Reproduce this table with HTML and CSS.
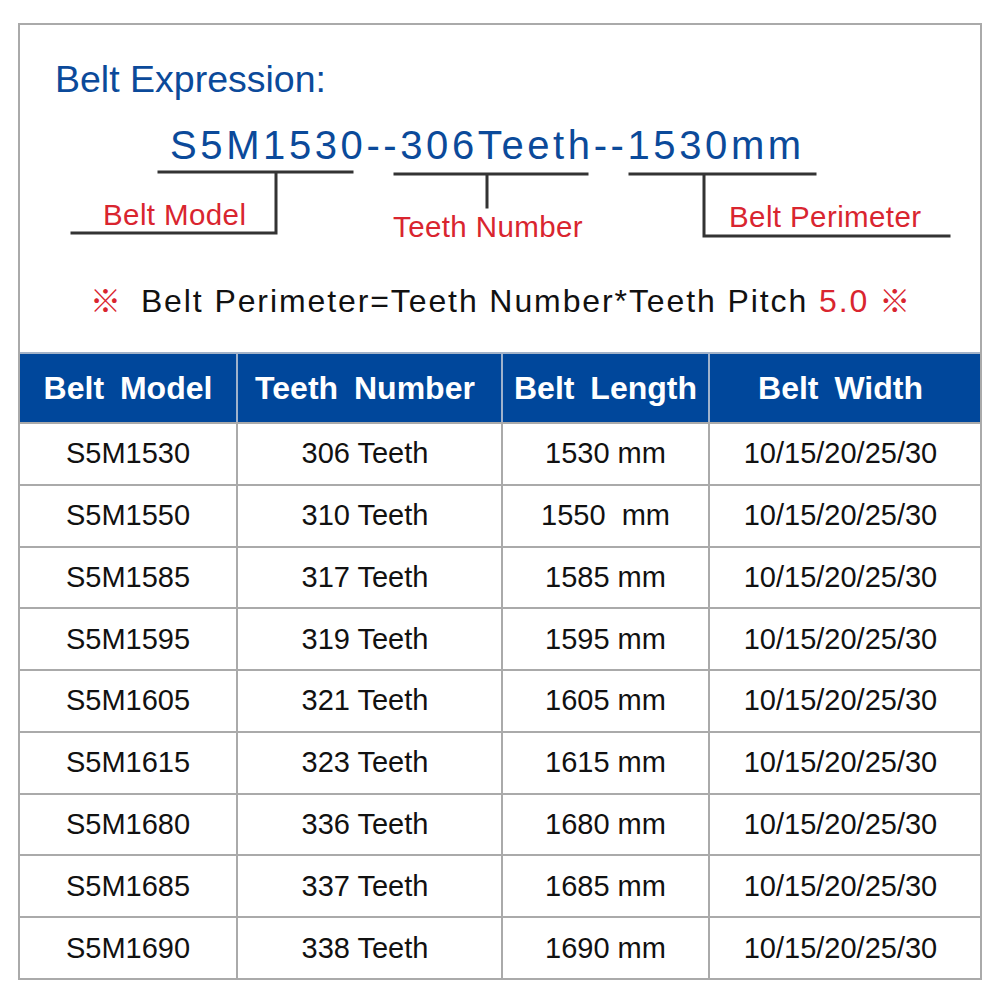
FILE: index.html
```html
<!DOCTYPE html>
<html>
<head>
<meta charset="utf-8">
<link rel="stylesheet" href="styles.css">
</head>
<body>
<div class="box">
  <section class="top">
    <h1 class="title">Belt Expression:</h1>
    <div class="diagram">
      <div class="expr">S5M1530--306Teeth--1530mm</div>
      <svg class="lines" width="960" height="130" viewBox="0 0 960 130">
        <g stroke="#333" stroke-width="3" fill="none" stroke-linecap="square">
          <path d="M139 52 H332 M256 52 V113 H52"/>
          <path d="M375 54 H567 M467 54 V87"/>
          <path d="M610 54 H795 M684 54 V116 H929"/>
        </g>
      </svg>
      <span class="label lbl-model">Belt Model</span>
      <span class="label lbl-teeth">Teeth Number</span>
      <span class="label lbl-perim">Belt Perimeter</span>
    </div>
    <p class="formula"><span class="mark">※</span>Belt Perimeter=Teeth Number*Teeth Pitch <span class="red">5.0</span><span class="mark mark-end">※</span></p>
  </section>
  <div class="table">
    <div class="row head">
      <div class="cell">Belt Model</div>
      <div class="cell">Teeth Number</div>
      <div class="cell">Belt Length</div>
      <div class="cell">Belt Width</div>
    </div>
    <div class="row"><div class="cell">S5M1530</div><div class="cell">306 Teeth</div><div class="cell">1530 mm</div><div class="cell">10/15/20/25/30</div></div>
    <div class="row"><div class="cell">S5M1550</div><div class="cell">310 Teeth</div><div class="cell">1550&nbsp; mm</div><div class="cell">10/15/20/25/30</div></div>
    <div class="row"><div class="cell">S5M1585</div><div class="cell">317 Teeth</div><div class="cell">1585 mm</div><div class="cell">10/15/20/25/30</div></div>
    <div class="row"><div class="cell">S5M1595</div><div class="cell">319 Teeth</div><div class="cell">1595 mm</div><div class="cell">10/15/20/25/30</div></div>
    <div class="row"><div class="cell">S5M1605</div><div class="cell">321 Teeth</div><div class="cell">1605 mm</div><div class="cell">10/15/20/25/30</div></div>
    <div class="row"><div class="cell">S5M1615</div><div class="cell">323 Teeth</div><div class="cell">1615 mm</div><div class="cell">10/15/20/25/30</div></div>
    <div class="row"><div class="cell">S5M1680</div><div class="cell">336 Teeth</div><div class="cell">1680 mm</div><div class="cell">10/15/20/25/30</div></div>
    <div class="row"><div class="cell">S5M1685</div><div class="cell">337 Teeth</div><div class="cell">1685 mm</div><div class="cell">10/15/20/25/30</div></div>
    <div class="row"><div class="cell">S5M1690</div><div class="cell">338 Teeth</div><div class="cell">1690 mm</div><div class="cell">10/15/20/25/30</div></div>
  </div>
</div>
</body>
</html>
```
FILE: styles.css
```css
html, body {
  margin: 0;
  padding: 0;
  background: #ffffff;
}
body {
  font-family: "Liberation Sans", Arial, "Noto Sans CJK SC", sans-serif;
  color: #111;
}
.box {
  margin: 23px 0 0 18px;
  width: 960px;
  border: 2px solid #aaaaaa;
}
.top {
  height: 327px;
  display: flex;
  flex-direction: column;
}
.title {
  margin: 36px 0 0 35px;
  font-size: 37.5px;
  line-height: 37px;
  font-weight: normal;
  color: #0b4a9a;
}
.diagram {
  position: relative;
  margin-top: 22px;
  height: 130px;
}
.expr {
  position: absolute;
  left: 150px;
  top: 5px;
  font-size: 40px;
  line-height: 40px;
  letter-spacing: 3.6px;
  color: #0b4a9a;
  white-space: nowrap;
}
.lines {
  position: absolute;
  left: 0;
  top: 0;
}
.label {
  position: absolute;
  font-size: 29.5px;
  line-height: 29px;
  color: #d9252f;
  white-space: nowrap;
  letter-spacing: 0.4px;
}
.lbl-model { left: 83px; top: 80px; }
.lbl-teeth { left: 373px; top: 92px; }
.lbl-perim { left: 709px; top: 82px; }
.formula {
  margin: 33px 0 0 0;
  text-align: center;
  font-size: 32px;
  line-height: 32px;
  color: #111;
  letter-spacing: 1.9px;
}
.red { color: #d9252f; }
.mark {
  color: #d9252f;
  font-family: "Noto Sans CJK SC", sans-serif;
  font-size: 31px;
  letter-spacing: 0;
  margin-right: 20px;
}
.mark-end {
  margin-right: 0;
  margin-left: 10px;
}
.table {
  display: flex;
  flex-direction: column;
}
.row {
  display: grid;
  grid-template-columns: 216px 265px 207px 272px;
  height: 61.78px;
  box-sizing: border-box;
  border-top: 2px solid #aaaaaa;
}
.cell {
  display: flex;
  align-items: center;
  justify-content: center;
  font-size: 29px;
  white-space: nowrap;
  color: #111;
}
.cell + .cell {
  border-left: 2px solid #aaaaaa;
}
.cell:nth-child(2),
.cell:nth-child(4) {
  padding-right: 9px;
}
.head {
  height: 70px;
  background: #00479b;
  border-top: 2px solid #a3b3c9;
}
.head .cell {
  color: #ffffff;
  font-weight: bold;
  font-size: 32px;
  word-spacing: 7px;
}
.head .cell + .cell {
  border-left: 2px solid #9fb2cc;
}
```
